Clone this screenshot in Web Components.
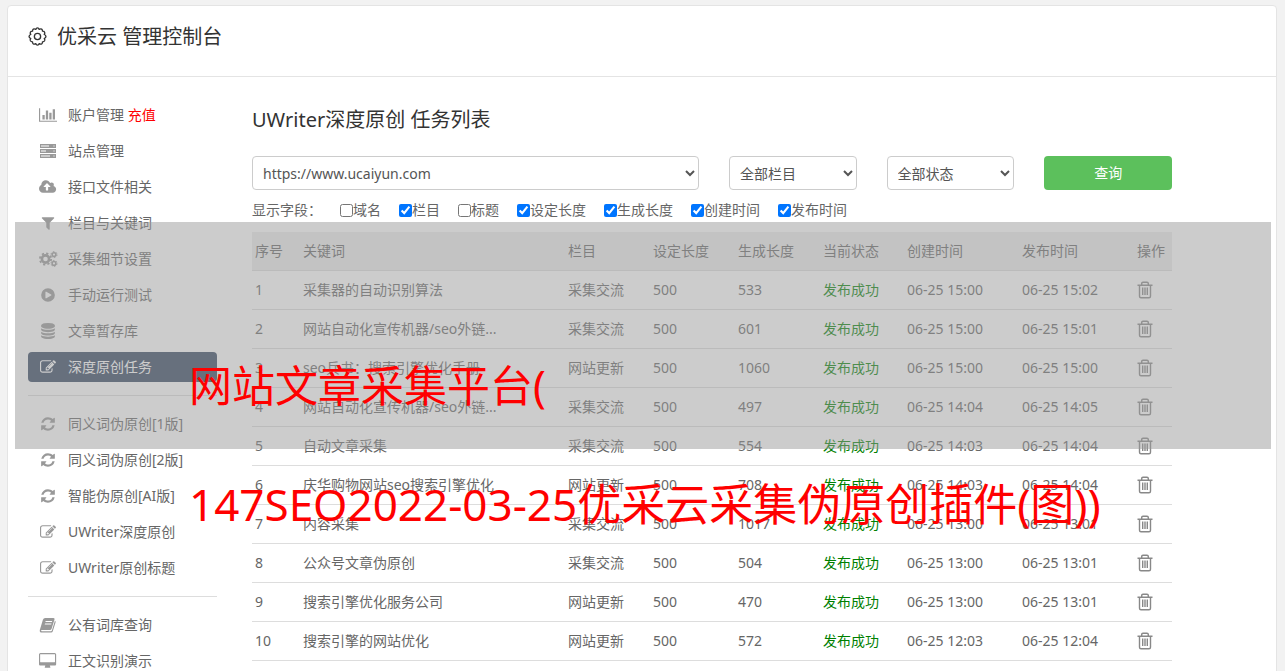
<!DOCTYPE html>
<html lang="zh-CN">
<head>
<meta charset="utf-8">
<title>优采云 管理控制台</title>
<style>
  html {
    scrollbar-width: none;
    background: #f2f2f2;
  }

  body {
    margin: 0;
    color: #666;
    font: 14px/20px "Noto Sans", "Noto Sans CJK SC", sans-serif;
  }
</style>
</head>
<body>
<app-console></app-console>

<script>
const ICONS = {
  gear: ["0 0 20 20", '<g fill="none" stroke="currentColor" stroke-width="1.4" stroke-linejoin="round"><path d="M10 1q1.300 0 1.700 1.500 1.500-1 2.700-.3 1 .7.800 2.200 1.700-.1 2.300 1.100.5 1.200-.4 2.400 1.700.7 1.800 2.100 0 1.300-1.800 2.100 1 1.300.4 2.400-.7 1.200-2.300 1.100.2 1.500-.8 2.200-1.200.7-2.700-.3Q11.300 19 10 19t-1.700-1.500q-1.500 1-2.700.3-1-.7-.8-2.200-1.600.1-2.300-1.100-.6-1.100.4-2.400-1.800-.8-1.800-2.100.1-1.400 1.800-2.100-.9-1.200-.4-2.400.6-1.200 2.300-1.100-.2-1.500.8-2.200 1.200-.7 2.700.3Q8.700 1 10 1z"/><circle cx="10" cy="10" r="3.300"/></g>'],
  chart: ["0 0 2048 1792", '<path d="M640 896v512h-256v-512h256zm384-512v1024h-256v-1024h256zm1024 1152v128h-2048v-1536h128v1408h1920zm-640-896v768h-256v-768h256zm384-384v1152h-256v-1152h256z"/>'],
  server: ["0 0 16 16", '<path fill-rule="evenodd" d="M0 1h16v4H0zM1 2.500v1h8v-1zM13.500 2.500v1h1v-1zM0 6h16v4H0zM1 7.500v1h5v-1zM13.500 7.500v1h1v-1zM0 11h16v4H0zM1 12.500v1h9v-1zM13.500 12.500v1h1v-1z"/>'],
  upload: ["0 0 1920 1792", '<path d="M1280 864q0-14-9-23l-352-352q-9-9-23-9t-23 9l-351 351q-10 12-10 24 0 14 9 23t23 9h224v352q0 13 9.500 22.500t22.500 9.500h192q13 0 22.500-9.500t9.500-22.500v-352h224q13 0 22.500-9.500t9.500-22.500zm640 288q0 159-112.500 271.500t-271.500 112.500h-1088q-185 0-316.500-131.500t-131.500-316.500q0-130 70-240t188-165q-2-30-2-43 0-212 150-362t362-150q156 0 285.500 87t188.500 231q71-62 166-62 106 0 181 75t75 181q0 76-41 138 130 31 213.500 135.500t83.500 238.500z"/>'],
  filter: ["0 0 1792 1792", '<path d="M1595 295q17 41-14 70l-493 493v742q0 42-39 59-13 5-25 5-27 0-45-19l-256-256q-19-19-19-45v-486l-493-493q-31-29-14-70 17-39 59-39h1280q42 0 59 39z"/>'],
  cogs: ["0 0 19 16", '<g fill="none" stroke="currentColor"><circle cx="6.500" cy="8" r="3.600" stroke-width="2.600"/><circle cx="6.500" cy="8" r="5.600" stroke-width="1.800" stroke-dasharray="2.200 2.200"/><circle cx="15" cy="3.600" r="1.900" stroke-width="1.500"/><circle cx="15" cy="3.600" r="3" stroke-width="1" stroke-dasharray="1.600 1.540"/><circle cx="15" cy="12.400" r="1.900" stroke-width="1.500"/><circle cx="15" cy="12.400" r="3" stroke-width="1" stroke-dasharray="1.600 1.540"/></g>'],
  play: ["0 0 1792 1792", '<path fill-rule="evenodd" d="M896 128a768 768 0 1 1 0 1536a768 768 0 1 1 0-1536zM1248 951q32-18 32-55t-32-55l-544-320q-31-19-64-1-32 19-32 56v640q0 37 32 56 16 8 32 8 17 0 32-9z"/>'],
  database: ["0 0 1792 1792", '<path d="M896 768q237 0 443-43t325-127v170q0 69-103 128t-280 93.500-385 34.500-385-34.500-280-93.500-103-128v-170q119 84 325 127t443 43zm0 768q237 0 443-43t325-127v170q0 69-103 128t-280 93.500-385 34.500-385-34.500-280-93.500-103-128v-170q119 84 325 127t443 43zm0-384q237 0 443-43t325-127v170q0 69-103 128t-280 93.500-385 34.500-385-34.500-280-93.500-103-128v-170q119 84 325 127t443 43zm0-1152q208 0 385 34.500t280 93.500 103 128v128q0 69-103 128t-280 93.500-385 34.500-385-34.500-280-93.500-103-128v-128q0-69 103-128t280-93.500 385-34.500z"/>'],
  edit: ["0 0 1792 1792", '<path d="M888 1184l116-116-152-152-116 116v56h96v96h56zm440-720q-16-16-33 1l-350 350q-17 17-1 33t33-1l350-350q17-17 1-33zm80 594v190q0 119-84.500 203.500t-203.500 84.500h-832q-119 0-203.500-84.500t-84.500-203.500v-832q0-119 84.500-203.500t203.500-84.500h832q63 0 117 25 15 7 18 23 3 17-9 29l-49 49q-14 14-32 8-23-6-45-6h-832q-66 0-113 47t-47 113v832q0 66 47 113t113 47h832q66 0 113-47t47-113v-126q0-13 9-22l64-64q15-15 35-7t20 29zm-96-738l288 288-672 672h-288v-288zm444 132l-92 92-288-288 92-92q28-28 68-28t68 28l152 152q28 28 28 68t-28 68z"/>'],
  refresh: ["0 0 1792 1792", '<path d="M1639 1056q0 5-1 7-64 268-268 434.500t-478 166.500q-146 0-282.500-55t-243.500-157l-129 129q-19 19-45 19t-45-19-19-45v-448q0-26 19-45t45-19h448q26 0 45 19t19 45-19 45l-137 137q71 66 161 102t187 36q134 0 250-65t186-179q11-17 53-117 8-23 30-23h192q13 0 22.500 9.500t9.500 22.500zm25-800v448q0 26-19 45t-45 19h-448q-26 0-45-19t-19-45 19-45l138-138q-148-137-349-137-134 0-250 65t-186 179q-11 17-53 117-8 23-30 23h-199q-13 0-22.500-9.500t-9.500-22.500v-7q65-268 270-434.500t480-166.500q146 0 284 55.500t245 156.500l130-129q19-19 45-19t45 19 19 45z"/>'],
  book: ["0 0 18 16", '<path fill-rule="evenodd" d="M6.200 1h8.300q1.500 0 1 1.600l-3 9.400q-.3 1-1.500 1H3q-.9 0-1 .6-.1.600.9.600h9q.8 0 1-.7l3-9.700q1 .4.700 1.500l-2.800 9q-.4 1.300-1.700 1.300H2.800Q.4 15.600.8 13L3.900 2.700Q4.500 1 6.200 1zM6.700 4l-.3 1h6.500l.3-1zM6 6.400l-.3 1h6.500l.3-1z"/>'],
  desktop: ["0 0 1920 1792", '<path d="M1792 992v-832q0-13-9.500-22.500t-22.500-9.500h-1600q-13 0-22.500 9.500t-9.500 22.500v832q0 13 9.500 22.500t22.500 9.500h1600q13 0 22.500-9.500t9.500-22.500zm128-832v1088q0 66-47 113t-113 47h-544q0 37 16 77.500t32 71 16 43.500q0 26-19 45t-45 19h-512q-26 0-45-19t-19-45q0-14 16-44t32-70 16-78h-544q-66 0-113-47t-47-113v-1088q0-66 47-113t113-47h1600q66 0 113 47t47 113z"/>'],
  trash: ["0 0 16 18", '<g fill="none" stroke="currentColor" stroke-width="1.400"><path d="M.5 4.200h15M4.700 4V2.500q0-1.300 1.300-1.300h4q1.300 0 1.300 1.300V4M2.500 4.500v10.700q0 1.500 1.500 1.500h8q1.500 0 1.500-1.500V4.500M5.700 6.500v7.500M8 6.500v7.500M10.300 6.500v7.500"/></g>']
};

class UiIcon extends HTMLElement {
  connectedCallback() {
    const [box, body] = ICONS[this.getAttribute("name")];
    this.attachShadow({ mode: "open" }).innerHTML = `
      <style>
        :host {
          display: inline-flex;
          justify-content: center;
          align-items: center;
        }

        svg {
          display: block;
          height: var(--icon-size, 16px);
          fill: currentColor;
        }
      </style>
      <svg viewBox="${box}" aria-hidden="true">${body}</svg>
    `;
  }
}

class NavItem extends HTMLElement {
  connectedCallback() {
    this.attachShadow({ mode: "open" }).innerHTML = `
      <style>
        :host {
          display: block;
        }

        a {
          display: flex;
          align-items: center;
          gap: 10px;
          height: 30px;
          padding: 0 10px;
          border-radius: 4px;
          color: #666;
          text-decoration: none;
        }

        ui-icon {
          width: 20px;
          color: #999;
        }

        :host([active]) a {
          background: #344661;
          color: #fff;
        }

        :host([active]) ui-icon {
          color: #fff;
        }
      </style>
      <a href="#"><ui-icon name="${this.getAttribute("icon")}"></ui-icon><span><slot></slot></span></a>
    `;
  }
}

class SideNav extends HTMLElement {
  connectedCallback() {
    this.attachShadow({ mode: "open" }).innerHTML = `
      <style>
        :host {
          display: block;
        }

        nav {
          display: flex;
          flex-direction: column;
          gap: 6px;
        }

        hr {
          width: 100%;
          margin: 7px 0;
          border: 0;
          border-top: 1px solid #ddd;
          box-sizing: border-box;
        }

        b {
          color: #f00;
          font-weight: inherit;
        }
      </style>
      <nav>
        <nav-item icon="chart">账户管理 <b>充值</b></nav-item>
        <nav-item icon="server">站点管理</nav-item>
        <nav-item icon="upload">接口文件相关</nav-item>
        <nav-item icon="filter">栏目与关键词</nav-item>
        <nav-item icon="cogs">采集细节设置</nav-item>
        <nav-item icon="play">手动运行测试</nav-item>
        <nav-item icon="database">文章暂存库</nav-item>
        <nav-item icon="edit" active>深度原创任务</nav-item>
        <hr>
        <nav-item icon="refresh">同义词伪原创[1版]</nav-item>
        <nav-item icon="refresh">同义词伪原创[2版]</nav-item>
        <nav-item icon="refresh">智能伪原创[AI版]</nav-item>
        <nav-item icon="edit">UWriter深度原创</nav-item>
        <nav-item icon="edit">UWriter原创标题</nav-item>
        <hr>
        <nav-item icon="book">公有词库查询</nav-item>
        <nav-item icon="desktop">正文识别演示</nav-item>
      </nav>
    `;
  }
}

class TaskFilter extends HTMLElement {
  connectedCallback() {
    const fields = [
      ["域名", false],
      ["栏目", true],
      ["标题", false],
      ["设定长度", true],
      ["生成长度", true],
      ["创建时间", true],
      ["发布时间", true]
    ];

    this.attachShadow({ mode: "open" }).innerHTML = `
      <style>
        :host {
          display: block;
        }

        form {
          display: grid;
          grid-template-columns: 7fr 2fr 2fr 2fr;
          gap: 30px;
        }

        select,
        button {
          width: 100%;
          height: 34px;
          border-radius: 4px;
          font: inherit;
          box-sizing: border-box;
        }

        select {
          padding: 6px;
          border: 1px solid #ccc;
          background: #fff;
          color: #555;
        }

        button {
          border: 0;
          background: #5cc05c;
          color: #fff;
        }

        .fields {
          display: flex;
          gap: 18px;
          margin-top: 10px;
        }

        label {
          display: flex;
          align-items: center;
        }

        input {
          width: 13px;
          height: 13px;
          margin: 0;
        }
      </style>
      <form>
        <select aria-label="站点"><option>https://www.ucaiyun.com</option></select>
        <select aria-label="栏目"><option>全部栏目</option></select>
        <select aria-label="状态"><option>全部状态</option></select>
        <button type="button">查询</button>
      </form>
      <div class="fields">
        <span>显示字段：</span>
        ${fields.map(([name, on]) => `<label><input type="checkbox"${on ? " checked" : ""}>${name}</label>`).join("")}
      </div>
    `;
  }
}

class TaskTable extends HTMLElement {
  connectedCallback() {
    const rows = [
      ["采集器的自动识别算法", "采集交流", 533, "15:00", "15:02"],
      ["网站自动化宣传机器/seo外链...", "采集交流", 601, "15:00", "15:01"],
      ["seo兵书：搜索引擎优化手册", "网站更新", 1060, "15:00", "15:00"],
      ["网站自动化宣传机器/seo外链...", "采集交流", 497, "14:04", "14:05"],
      ["自动文章采集", "采集交流", 554, "14:03", "14:04"],
      ["庆华购物网站seo搜索引擎优化", "网站更新", 708, "14:03", "14:04"],
      ["内容采集", "采集交流", 1017, "13:00", "13:01"],
      ["公众号文章伪原创", "采集交流", 504, "13:00", "13:01"],
      ["搜索引擎优化服务公司", "网站更新", 470, "13:00", "13:01"],
      ["搜索引擎的网站优化", "网站更新", 572, "12:03", "12:04"]
    ];

    this.attachShadow({ mode: "open" }).innerHTML = `
      <style>
        :host {
          display: block;
        }

        table {
          width: 100%;
          border-collapse: separate;
          border-spacing: 0;
          table-layout: fixed;
        }

        th,
        td {
          height: 38px;
          padding: 0 3px;
          border-bottom: 1px solid #ddd;
          font-weight: inherit;
          text-align: left;
          white-space: nowrap;
        }

        th {
          background: #ededed;
        }

        .no { width: 42px; }
        .mid { width: 79px; }
        .state { width: 78px; }
        .time { width: 109px; }
        .op { width: 32px; }

        .ok {
          color: #008000;
        }

        button {
          display: block;
          margin-top: 2px;
          padding: 0;
          border: 0;
          background: none;
          color: #888;
          --icon-size: 18px;
        }
      </style>
      <table>
        <thead>
          <tr>
            <th class="no">序号</th>
            <th>关键词</th>
            <th class="mid">栏目</th>
            <th class="mid">设定长度</th>
            <th class="mid">生成长度</th>
            <th class="state">当前状态</th>
            <th class="time">创建时间</th>
            <th class="time">发布时间</th>
            <th class="op">操作</th>
          </tr>
        </thead>
        <tbody>
          ${rows.map(([word, column, size, made, sent], i) => `
            <tr>
              <td>${i + 1}</td>
              <td>${word}</td>
              <td>${column}</td>
              <td>500</td>
              <td>${size}</td>
              <td class="ok">发布成功</td>
              <td>06-25 ${made}</td>
              <td>06-25 ${sent}</td>
              <td><button type="button" aria-label="删除"><ui-icon name="trash"></ui-icon></button></td>
            </tr>
          `).join("")}
        </tbody>
      </table>
    `;
  }
}

class CaptionBanner extends HTMLElement {
  connectedCallback() {
    this.attachShadow({ mode: "open" }).innerHTML = `
      <style>
        :host {
          position: absolute;
          top: 222px;
          left: 15px;
          right: 14px;
          height: 227px;
          background: rgba(153, 153, 153, .5);
          pointer-events: none;
        }

        p {
          margin: 0;
          padding: 134px 0 0 174px;
          color: #f00;
          font-size: 43px;
          line-height: 60px;
          white-space: nowrap;
        }

        p + p {
          padding-top: 58px;
          font-size: 44px;
        }
      </style>
      <p>网站文章采集平台(</p>
      <p>147SEO2022-03-25优采云采集伪原创插件(图))</p>
    `;
  }
}

class AppConsole extends HTMLElement {
  connectedCallback() {
    this.attachShadow({ mode: "open" }).innerHTML = `
      <style>
        :host {
          display: block;
          position: relative;
          padding: 5px 8px 0 7px;
        }

        .card {
          border: 1px solid #e4e4e4;
          border-radius: 4px;
          background: #fff;
        }

        header {
          display: flex;
          align-items: center;
          gap: 10px;
          height: 60px;
          padding: 0 20px 10px;
          border-bottom: 1px solid #e4e4e4;
          color: #333;
          --icon-size: 19px;
        }

        h1,
        h2 {
          margin: 0;
          color: #333;
          font-size: 20px;
          font-weight: 400;
          line-height: 28px;
        }

        h1 {
          padding-top: 2px;
        }

        .content {
          display: grid;
          grid-template-columns: 189px minmax(0, 1fr);
          gap: 35px;
          padding: 23px 104px 20px 20px;
        }

        h2 {
          margin: 6px 0 22px;
        }

        task-table {
          margin-top: 12px;
        }
      </style>
      <div class="card">
        <header>
          <ui-icon name="gear"></ui-icon>
          <h1>优采云 管理控制台</h1>
        </header>
        <div class="content">
          <side-nav></side-nav>
          <main>
            <h2>UWriter深度原创 任务列表</h2>
            <task-filter></task-filter>
            <task-table></task-table>
          </main>
        </div>
      </div>
      <caption-banner></caption-banner>
    `;
  }
}

customElements.define("ui-icon", UiIcon);
customElements.define("nav-item", NavItem);
customElements.define("side-nav", SideNav);
customElements.define("task-filter", TaskFilter);
customElements.define("task-table", TaskTable);
customElements.define("caption-banner", CaptionBanner);
customElements.define("app-console", AppConsole);
</script>
</body>
</html>
